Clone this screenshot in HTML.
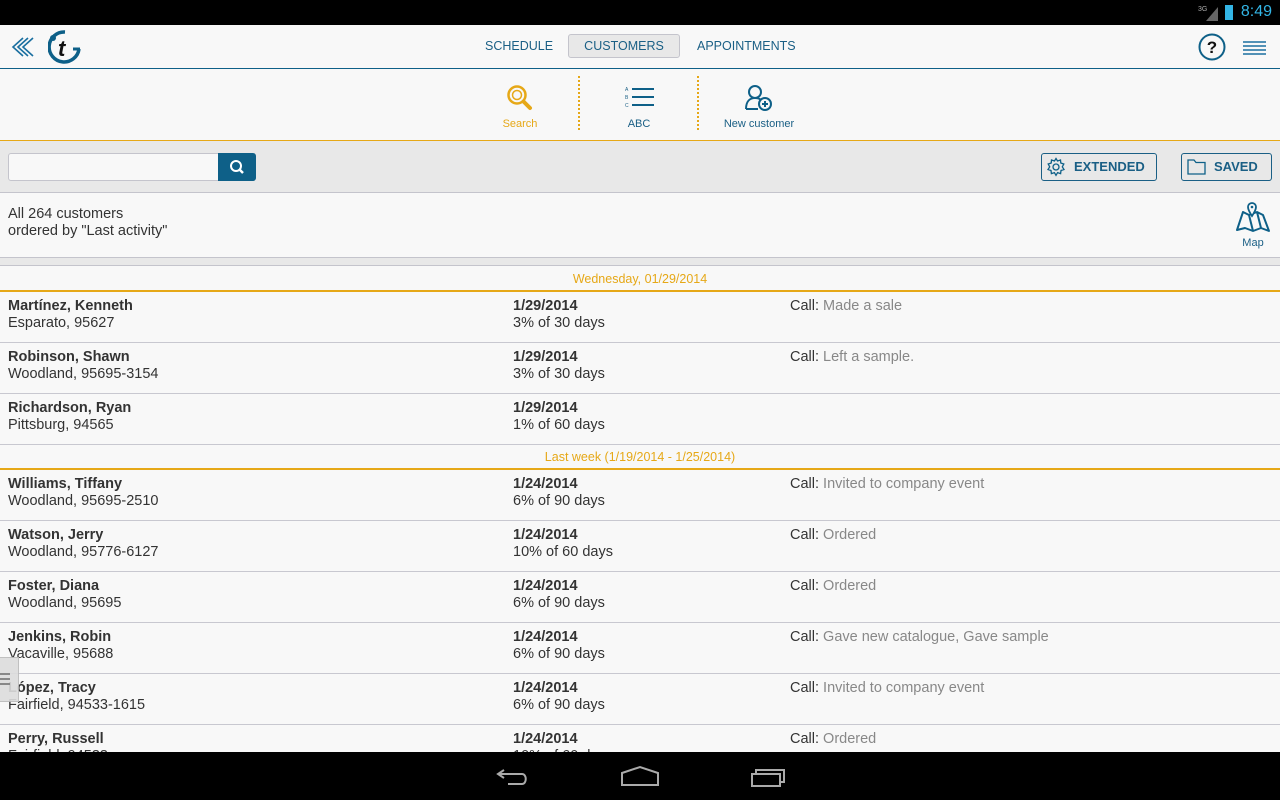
<!DOCTYPE html>
<html><head><meta charset="utf-8"><style>
*{margin:0;padding:0;box-sizing:border-box}
body{width:1280px;height:800px;overflow:hidden;background:#f8f8f8;font-family:"Liberation Sans",sans-serif;position:relative;color:#333}
.abs{position:absolute}
.sb{left:0;top:0;width:1280px;height:25px;background:#000}
.hdr{left:0;top:25px;width:1280px;height:44px;background:#f8f8f8;border-bottom:1px solid #0e6088}
.tab{top:34px;height:24px;font-size:12.5px;color:#1a5f85;line-height:24px}
.tb{left:0;top:69px;width:1280px;height:72px;border-bottom:1px solid #e6a817}
.lbl{font-size:11px;text-align:center;top:118px}
.sep{top:76px;height:54px;border-left:2px dotted #e6a817}
.srch{left:0;top:141px;width:1280px;height:52px;background:#e8e8e8;border-bottom:1px solid #c4c4cc}
.btn{border:1px solid #1a5f85;border-radius:3px;height:28px;top:153px;font-size:13px;font-weight:bold;color:#1a5f85;line-height:26px}
.info{top:206px;left:8px;font-size:14.5px;line-height:17px;color:#333}
.strip{left:0;top:257px;width:1280px;height:9px;background:#e8e8e8;border-top:1px solid #c4c4cc;border-bottom:1px solid #c4c4cc}
.sh{left:0;width:1280px;height:25px;text-align:center;font-size:12.5px;color:#e6a817;line-height:24px;border-bottom:2px solid #e6a817}
.row{left:0;width:1280px;height:51px;border-bottom:1px solid #c8c8d0;font-size:14.5px;line-height:17px}
.row div{position:absolute;top:6px}
.row b{color:#333}
.c1{left:8px}.c2{left:513px}.c3{left:790px}
.g{color:#888}
.nav{left:0;top:752px;width:1280px;height:48px;background:#000}
</style></head><body>
<div class="abs sb"></div>
<div class="abs" style="right:8px;top:3px;color:#33b5e5;font-size:16px">8:49</div>
<div class="abs" style="left:1225px;top:5px;width:8px;height:15px;background:#33b5e5"></div>
<svg class="abs" style="left:1198px;top:3px" width="22" height="18"><text x="0" y="8" font-size="7" fill="#aaa" font-family="Liberation Sans">3G</text><path d="M8 18 L20 4 L20 18Z" fill="#666"/></svg>
<div class="abs hdr"></div>
<svg class="abs" style="left:10px;top:36px" width="24" height="22"><path d="M13 2 L3 11 L13 20 M18 2 L8 11 L18 20 M23 2 L13 11 L23 20" stroke="#1a6fa0" stroke-width="1.6" fill="none"/></svg>
<svg class="abs" style="left:48px;top:30px" width="34" height="34"><path d="M17 2 A15 15 0 1 0 31 19" stroke="#0e6088" stroke-width="3.5" fill="none"/><path d="M25 19 H32" stroke="#0e6088" stroke-width="3"/><circle cx="5" cy="8" r="3" fill="#0e6088"/><text x="10" y="26" font-size="22" font-weight="bold" font-style="italic" fill="#111" font-family="Liberation Sans">t</text></svg>
<div class="abs tab" style="left:485px">SCHEDULE</div>
<div class="abs tab" style="left:568px;width:112px;text-align:center;background:#e8e8e8;border:1px solid #c4c4cc;border-radius:3px;line-height:22px">CUSTOMERS</div>
<div class="abs tab" style="left:697px">APPOINTMENTS</div>
<svg class="abs" style="left:1198px;top:33px" width="28" height="28"><circle cx="14" cy="14" r="12.5" stroke="#0e6088" stroke-width="2" fill="none"/><text x="14" y="20" text-anchor="middle" font-size="17" font-weight="bold" fill="#111" font-family="Liberation Sans">?</text></svg>
<svg class="abs" style="left:1243px;top:40px" width="24" height="16"><path d="M0 2H23M0 6H23M0 10H23M0 14H23" stroke="#1a6fa0" stroke-width="1.5"/></svg>
<div class="abs tb"></div>
<svg class="abs" style="left:506px;top:84px" width="30" height="30"><circle cx="11" cy="11" r="8.5" stroke="#e6a817" stroke-width="2.5" fill="none"/><circle cx="11" cy="11" r="4.5" stroke="#e6a817" stroke-width="1.5" fill="none"/><path d="M17.5 17.5 L24 24" stroke="#e6a817" stroke-width="4" stroke-linecap="round"/></svg>
<div class="abs lbl" style="left:490px;width:60px;color:#e6a817">Search</div>
<div class="abs sep" style="left:578px"></div>
<svg class="abs" style="left:625px;top:85px" width="32" height="24"><text x="0" y="6" font-size="5" fill="#1a5f85">A</text><text x="0" y="14" font-size="5" fill="#1a5f85">B</text><text x="0" y="22" font-size="5" fill="#1a5f85">C</text><path d="M7 4H29M7 12H29M7 20H29" stroke="#0e6088" stroke-width="2"/></svg>
<div class="abs lbl" style="left:609px;width:60px;color:#1a5f85">ABC</div>
<div class="abs sep" style="left:697px"></div>
<svg class="abs" style="left:744px;top:84px" width="32" height="28"><circle cx="11" cy="8" r="6" stroke="#0e6088" stroke-width="2" fill="none"/><path d="M2 25 C2 17 6 14 11 14 C14 14 16 15 17 16 M2 25 H14" stroke="#0e6088" stroke-width="2" fill="none"/><circle cx="21" cy="20" r="6" stroke="#0e6088" stroke-width="2" fill="#f8f8f8"/><path d="M18 20H24M21 17V23" stroke="#0e6088" stroke-width="2"/></svg>
<div class="abs lbl" style="left:714px;width:90px;color:#1a5f85">New customer</div>
<div class="abs srch"></div>
<div class="abs" style="left:8px;top:153px;width:212px;height:28px;background:#f8f8f8;border:1px solid #c4c4cc;border-radius:3px 0 0 3px"></div>
<div class="abs" style="left:218px;top:153px;width:38px;height:28px;background:#0e6088;border-radius:0 3px 3px 0"></div>
<svg class="abs" style="left:228px;top:158px" width="18" height="18"><circle cx="8" cy="8" r="5" stroke="#fff" stroke-width="2" fill="none"/><path d="M12 12L15 15" stroke="#fff" stroke-width="2.5"/></svg>
<div class="abs btn" style="left:1041px;width:116px;padding-left:32px">EXTENDED</div>
<svg class="abs" style="left:1046px;top:157px" width="20" height="20"><circle cx="10" cy="10" r="3" stroke="#0e6088" stroke-width="1.3" fill="none"/><path d="M10 1.5 L11.5 4 L14.5 3 L14.8 6 L17.8 7 L16.3 9.8 L18 12.5 L15 13.5 L14.6 16.6 L11.6 15.6 L10 18.3 L8.4 15.6 L5.4 16.6 L5 13.5 L2 12.5 L3.7 9.8 L2.2 7 L5.2 6 L5.5 3 L8.5 4 Z" stroke="#0e6088" stroke-width="1.3" fill="none"/></svg>
<div class="abs btn" style="left:1181px;width:91px;padding-left:32px">SAVED</div>
<svg class="abs" style="left:1187px;top:158px" width="20" height="18"><path d="M1 2H7L9 4.5H18V16H1Z" stroke="#0e6088" stroke-width="1.3" fill="none"/></svg>
<div class="abs info">All 264 customers<br>ordered by "Last activity"</div>
<svg class="abs" style="left:1235px;top:200px" width="36" height="34"><path d="M2 30 L8 12 L14 15 L22 12 L28 15 L34 31 L26 28 L18 31 L10 28 Z M14 15 L18 31 M22 12 L26 28" stroke="#0e6088" stroke-width="2" fill="#f8f8f8" stroke-linejoin="round"/><path d="M17 16 C13 10 13 8 13 7 A4 4 0 0 1 21 7 C21 8 21 10 17 16Z" stroke="#0e6088" stroke-width="1.8" fill="#f8f8f8"/><circle cx="17" cy="7" r="1.3" fill="#0e6088"/></svg>
<div class="abs" style="left:1238px;top:237px;font-size:11px;color:#1a5f85;width:30px;text-align:center">Map</div>
<div class="abs strip"></div>
<div class="abs sh" style="top:267px">Wednesday, 01/29/2014</div>
<div class="abs row" style="top:292px"><div class="c1"><b>Martínez, Kenneth</b><br>Esparato, 95627</div><div class="c2"><b>1/29/2014</b><br>3% of 30 days</div><div class="c3">Call: <span class="g">Made a sale</span></div></div>
<div class="abs row" style="top:343px"><div class="c1"><b>Robinson, Shawn</b><br>Woodland, 95695-3154</div><div class="c2"><b>1/29/2014</b><br>3% of 30 days</div><div class="c3">Call: <span class="g">Left a sample.</span></div></div>
<div class="abs row" style="top:394px"><div class="c1"><b>Richardson, Ryan</b><br>Pittsburg, 94565</div><div class="c2"><b>1/29/2014</b><br>1% of 60 days</div></div>
<div class="abs sh" style="top:445px">Last week (1/19/2014 - 1/25/2014)</div>
<div class="abs row" style="top:470px"><div class="c1"><b>Williams, Tiffany</b><br>Woodland, 95695-2510</div><div class="c2"><b>1/24/2014</b><br>6% of 90 days</div><div class="c3">Call: <span class="g">Invited to company event</span></div></div>
<div class="abs row" style="top:521px"><div class="c1"><b>Watson, Jerry</b><br>Woodland, 95776-6127</div><div class="c2"><b>1/24/2014</b><br>10% of 60 days</div><div class="c3">Call: <span class="g">Ordered</span></div></div>
<div class="abs row" style="top:572px"><div class="c1"><b>Foster, Diana</b><br>Woodland, 95695</div><div class="c2"><b>1/24/2014</b><br>6% of 90 days</div><div class="c3">Call: <span class="g">Ordered</span></div></div>
<div class="abs row" style="top:623px"><div class="c1"><b>Jenkins, Robin</b><br>Vacaville, 95688</div><div class="c2"><b>1/24/2014</b><br>6% of 90 days</div><div class="c3">Call: <span class="g">Gave new catalogue, Gave sample</span></div></div>
<div class="abs row" style="top:674px"><div class="c1"><b>López, Tracy</b><br>Fairfield, 94533-1615</div><div class="c2"><b>1/24/2014</b><br>6% of 90 days</div><div class="c3">Call: <span class="g">Invited to company event</span></div></div>
<div class="abs row" style="top:725px"><div class="c1"><b>Perry, Russell</b><br>Fairfield, 94533</div><div class="c2"><b>1/24/2014</b><br>10% of 60 days</div><div class="c3">Call: <span class="g">Ordered</span></div></div>
<div class="abs" style="left:0;top:657px;width:19px;height:45px;background:#ddd;border:1px solid #bbb;border-left:none;opacity:.9"></div>
<svg class="abs" style="left:0;top:672px" width="12" height="16"><path d="M0 2H10M0 7H10M0 12H10" stroke="#888" stroke-width="2"/></svg>
<div class="abs nav"></div>
<svg class="abs" style="left:494px;top:766px" width="36" height="22"><path d="M10 4 L4 8 L10 12 M4 8 H28 C33 8 33 18 28 18 H14" stroke="#aaa" stroke-width="2" fill="none"/></svg>
<svg class="abs" style="left:620px;top:765px" width="40" height="22"><path d="M2 8 L20 2 L38 8 V20 H2Z" stroke="#aaa" stroke-width="2" fill="none"/></svg>
<svg class="abs" style="left:750px;top:766px" width="40" height="22"><path d="M2 8 H30 V20 H2Z M6 8 V4 H34 V16 H30" stroke="#aaa" stroke-width="2" fill="none"/></svg>
</body></html>
